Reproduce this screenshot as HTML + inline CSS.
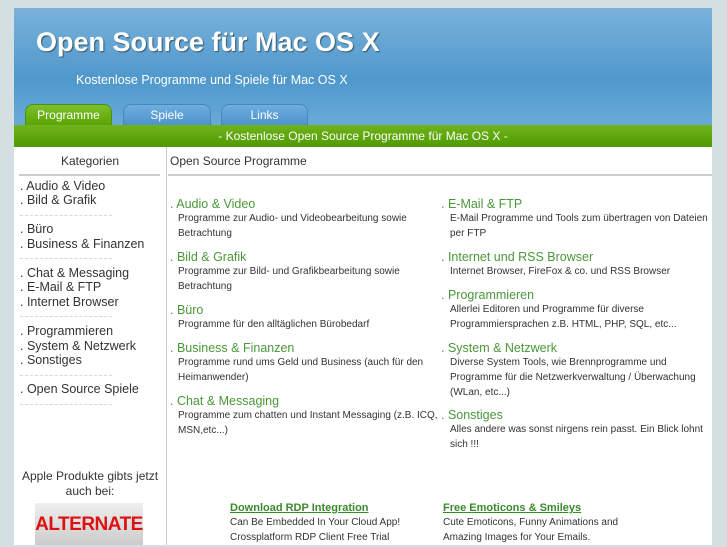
<!DOCTYPE html>
<html><head><meta charset="utf-8"><style>
*{margin:0;padding:0;box-sizing:border-box}
body{width:727px;height:545px;overflow:hidden;background:#d3dfe0;font-family:"Liberation Sans",sans-serif;position:relative}
.a{position:absolute;white-space:nowrap}
#hdr{position:absolute;left:14px;top:8px;width:698px;height:118px;background:linear-gradient(#7ab2da,#4f98cc 60%,#6aaad8)}
.tab{position:absolute;top:104px;height:22px;border-radius:8px 8px 0 0;color:#fff;font-size:12px;text-align:center;line-height:20px;border:1px solid #4a86b8;border-bottom:none;background:linear-gradient(#6eaee0,#4b92cc)}
#green{position:absolute;left:14px;top:125px;width:698px;height:22px;background:linear-gradient(#6fb41a,#4f9a00);color:#fff;font-size:12px;text-align:center;line-height:23px}
#main{position:absolute;left:14px;top:147px;width:698px;height:398px;background:#fff}
.cat{font-size:12.5px;color:#333;left:20px}
.sep{position:absolute;left:20px;width:92px;border-top:1px dashed #d8d8d8;height:0}
.t{font-size:12.5px;color:#4a973a}
.d{font-size:10px;color:#333;line-height:15px;white-space:normal}
</style></head><body>
<div id="hdr"></div>
<div class="a" style="left:36px;top:27px;font-size:27px;font-weight:bold;color:#fff;text-shadow:1px 1px 1px #356">Open Source für Mac OS X</div>
<div class="a" style="left:76px;top:73px;font-size:12.5px;color:#fff">Kostenlose Programme und Spiele für Mac OS X</div>
<div class="tab" style="left:25px;width:87px;background:linear-gradient(#7cc02a,#58a300);border-color:#4f8f10">Programme</div>
<div class="tab" style="left:123px;width:88px">Spiele</div>
<div class="tab" style="left:221px;width:87px">Links</div>
<div id="green">- Kostenlose Open Source Programme für Mac OS X -</div>
<div id="main"></div>
<div class="a" style="left:166px;top:147px;width:1px;height:398px;background:#ccc"></div>
<div class="a" style="left:61px;top:154px;font-size:12px;color:#333">Kategorien</div>
<div class="a" style="left:19px;top:174px;width:141px;height:2px;background:#ccc"></div>
<div class="a" style="left:170px;top:154px;font-size:12px;color:#333">Open Source Programme</div>
<div class="a" style="left:168px;top:174px;width:544px;height:2px;background:#ccc"></div>
<div class="a cat" style="top:179px">. Audio &amp; Video</div>
<div class="a cat" style="top:193px">. Bild &amp; Grafik</div>
<div class="sep" style="top:215px"></div>
<div class="a cat" style="top:222px">. Büro</div>
<div class="a cat" style="top:237px">. Business &amp; Finanzen</div>
<div class="sep" style="top:258px"></div>
<div class="a cat" style="top:266px">. Chat &amp; Messaging</div>
<div class="a cat" style="top:280px">. E-Mail &amp; FTP</div>
<div class="a cat" style="top:295px">. Internet Browser</div>
<div class="sep" style="top:316px"></div>
<div class="a cat" style="top:324px">. Programmieren</div>
<div class="a cat" style="top:339px">. System &amp; Netzwerk</div>
<div class="a cat" style="top:353px">. Sonstiges</div>
<div class="sep" style="top:375px"></div>
<div class="a cat" style="top:382px">. Open Source Spiele</div>
<div class="sep" style="top:404px"></div>
<div class="a" style="left:14px;top:469px;width:152px;text-align:center;font-size:12px;color:#333;white-space:normal;line-height:15px">Apple Produkte gibts jetzt auch bei:</div>
<div class="a" style="left:35px;top:503px;width:108px;height:42px;background:linear-gradient(#eee,#ccc);color:#d11;font-weight:bold;font-size:19px;text-align:center;line-height:44px;letter-spacing:-0.5px">ALTERNATE</div>

<div class="a t" style="left:170px;top:197px">. Audio &amp; Video</div>
<div class="a d" style="left:178px;top:211px;width:258px">Programme zur Audio- und Videobearbeitung sowie Betrachtung</div>
<div class="a t" style="left:170px;top:250px">. Bild &amp; Grafik</div>
<div class="a d" style="left:178px;top:264px;width:258px">Programme zur Bild- und Grafikbearbeitung sowie Betrachtung</div>
<div class="a t" style="left:170px;top:303px">. Büro</div>
<div class="a d" style="left:178px;top:317px;width:258px">Programme für den alltäglichen Bürobedarf</div>
<div class="a t" style="left:170px;top:341px">. Business &amp; Finanzen</div>
<div class="a d" style="left:178px;top:355px;width:258px">Programme rund ums Geld und Business (auch für den Heimanwender)</div>
<div class="a t" style="left:170px;top:394px">. Chat &amp; Messaging</div>
<div class="a d" style="left:178px;top:408px;width:262px">Programme zum chatten und Instant Messaging (z.B. ICQ, MSN,etc...)</div>

<div class="a t" style="left:441px;top:197px">. E-Mail &amp; FTP</div>
<div class="a d" style="left:450px;top:211px;width:262px">E-Mail Programme und Tools zum übertragen von Dateien per FTP</div>
<div class="a t" style="left:441px;top:250px">. Internet und RSS Browser</div>
<div class="a d" style="left:450px;top:264px;width:262px">Internet Browser, FireFox &amp; co. und RSS Browser</div>
<div class="a t" style="left:441px;top:288px">. Programmieren</div>
<div class="a d" style="left:450px;top:302px;width:250px">Allerlei Editoren und Programme für diverse Programmiersprachen z.B. HTML, PHP, SQL, etc...</div>
<div class="a t" style="left:441px;top:341px">. System &amp; Netzwerk</div>
<div class="a d" style="left:450px;top:355px;width:255px">Diverse System Tools, wie Brennprogramme und Programme für die Netzwerkverwaltung / Überwachung (WLan, etc...)</div>
<div class="a t" style="left:441px;top:408px">. Sonstiges</div>
<div class="a d" style="left:450px;top:422px;width:258px">Alles andere was sonst nirgens rein passt. Ein Blick lohnt sich !!!</div>

<div class="a" style="left:230px;top:502px;font-size:11px;font-weight:bold;color:#3a8a2a;text-decoration:underline">Download RDP Integration</div>
<div class="a d" style="left:230px;top:515px">Can Be Embedded In Your Cloud App!<br>Crossplatform RDP Client Free Trial</div>
<div class="a" style="left:443px;top:502px;font-size:11px;font-weight:bold;color:#3a8a2a;text-decoration:underline">Free Emoticons &amp; Smileys</div>
<div class="a d" style="left:443px;top:515px">Cute Emoticons, Funny Animations and<br>Amazing Images for Your Emails.</div>
</body></html>
